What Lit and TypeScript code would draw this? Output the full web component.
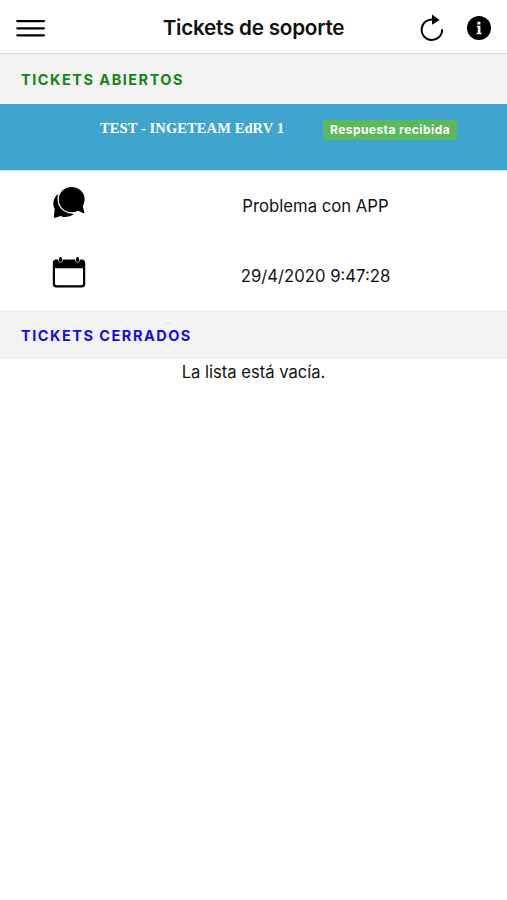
import { LitElement, html, css, svg } from "lit";
import { customElement, property } from "lit/decorators.js";

const menuIcon = svg`<path d="M1.300 2.200H27.900M1.300 9.300H27.900M1.300 16.300H27.900" fill="none" stroke="#000" stroke-width="2.200" stroke-linecap="round"/>`;

@customElement("app-header")
class AppHeader extends LitElement {
  static styles = css`
    :host { display: block; }
    .bar {
      display: grid;
      grid-template-columns: 1fr auto 1fr;
      align-items: center;
      box-sizing: border-box;
      height: 54px;
      padding: 3px 16px 0;
      border-bottom: 1px solid #dadada;
      background: #fff;
    }
    .title {
      margin: 0;
      font-size: 20.700px;
      font-weight: 560;
      line-height: 26px;
      letter-spacing: -0.25px;
      white-space: nowrap;
    }
    .actions { display: flex; justify-content: flex-end; align-items: center; gap: 23px; }
    svg { display: block; }
  `;
  render() {
    return html`
      <header class="bar">
        <svg class="menu" width="30" height="18" viewBox="0 0 30 18">${menuIcon}</svg>
        <h1 class="title">Tickets de soporte</h1>
        <div class="actions">
          <svg width="24" height="28" viewBox="0 0 24 28">
            <path d="M13 5.500A10.300 10.300 0 1 0 22.200 16" fill="none" stroke="#000" stroke-width="1.900" stroke-linecap="round"/>
            <path d="M12 .6 19.600 6 12 10.800Z"/>
          </svg>
          <svg width="24" height="24" viewBox="0 0 24 24">
            <circle cx="12" cy="12" r="12"/>
            <path d="M10.400 5.800h3v2.800h-3zM9.900 9.800h3.500v7h1.100v1.500H9.700v-1.500h1.100v-5.500H9.900z" fill="#fff"/>
          </svg>
        </div>
      </header>`;
  }
}

@customElement("section-title")
class SectionTitle extends LitElement {
  @property() tone = "open";
  static styles = css`
    :host { display: block; }
    .title {
      display: flex;
      align-items: center;
      box-sizing: border-box;
      height: 49px;
      margin: 0;
      padding: 2px 21px 0;
      background: #f2f2f2;
      font-size: 14.500px;
      font-weight: 680;
      letter-spacing: 1.500px;
    }
    .open { height: 50px; padding-top: 1px; color: #118611; }
    .closed { color: #1a0be0; }
  `;
  render() {
    return html`<h2 class="title ${this.tone}"><slot></slot></h2>`;
  }
}

@customElement("ticket-card")
class TicketCard extends LitElement {
  static styles = css`
    :host { display: block; }
    .banner {
      display: flex;
      align-items: flex-start;
      gap: 39px;
      box-sizing: border-box;
      height: 66px;
      padding: 16px 50px 0 100px;
      background: #3fa5cd;
      color: #fff;
      box-shadow: 0 1px 0 #bfe7f6;
    }
    .plant {
      width: 184px;
      font: 700 14.500px/17px "Liberation Serif", serif;
      letter-spacing: 0.1px;
      white-space: nowrap;
    }
    .badge {
      box-sizing: border-box;
      width: 134px;
      height: 20px;
      border-radius: 1px;
      background: #5cb85c;
      font-size: 12px;
      font-weight: 700;
      letter-spacing: 0.440px;
      line-height: 20px;
      text-align: center;
      white-space: nowrap;
    }
    .row {
      display: grid;
      grid-template-columns: 138px 1fr;
      align-items: center;
      height: 70px;
      padding-right: 14px;
    }
    .icon { justify-self: center; display: block; margin-bottom: 5px; overflow: visible; }
    .text { padding-top: 2px; font-size: 16.700px; line-height: 22px; text-align: center; }
  `;
  render() {
    return html`
      <div class="banner">
        <span class="plant">TEST - INGETEAM EdRV 1</span>
        <span class="badge">Respuesta recibida</span>
      </div>
      <div class="row">
        <svg class="icon" width="34" height="34" viewBox="0 0 34 34">
          <path d="M6 8C.8 12.500.3 18.400 2.700 23L1.900 30.500Q1.900 32.200 3.500 31.700L8.500 29.900Q15.500 33 22 28C11 26.500 4.500 18 6 8Z"/>
          <path d="M19.600.3C12 .3 6.200 6.200 6.200 13.500S12 26.900 19.600 26.900Q23.200 26.900 26 25.500L32 28Q33.300 28.100 33 26.700L31.400 20Q33.200 16.900 33.200 13.500C33.200 6.200 27 .3 19.600.3Z" stroke="#fff" stroke-width="1.200"/>
        </svg>
        <span class="text">Problema con APP</span>
      </div>
      <div class="row">
        <svg class="icon" width="34" height="34" viewBox="0 0 34 34">
          <path d="M4.300 3.500H29.700Q33.200 3.500 33.200 7V28Q33.200 31.500 29.700 31.500H4.300Q.8 31.500 .8 28V7Q.8 3.500 4.300 3.500ZM3 12.200V27.500Q3 29.300 4.800 29.300H29.200Q31 29.300 31 27.500V12.200Z" fill-rule="evenodd"/>
          <path d="M8.500 2V4.300M25.500 2V4.300" stroke="#fff" stroke-width="4.400" stroke-linecap="round"/>
          <path d="M8.500 2.500V4.400M25.500 2.500V4.400" stroke="#000" stroke-width="3" stroke-linecap="round"/>
        </svg>
        <span class="text">29/4/2020 9:47:28</span>
      </div>`;
  }
}

@customElement("app-root")
class AppRoot extends LitElement {
  static styles = css`
    :host {
      display: block;
      min-height: 100vh;
      background: #fff;
      color: #111;
      font-family: Inter, "Liberation Sans", sans-serif;
    }
    .empty { margin: 0; padding-top: 1px; font-size: 16.600px; line-height: 24px; text-align: center; }
  `;
  render() {
    return html`
      <app-header></app-header>
      <section-title tone="open">TICKETS ABIERTOS</section-title>
      <ticket-card></ticket-card>
      <section-title tone="closed">TICKETS CERRADOS</section-title>
      <p class="empty">La lista está vacía.</p>`;
  }
}
